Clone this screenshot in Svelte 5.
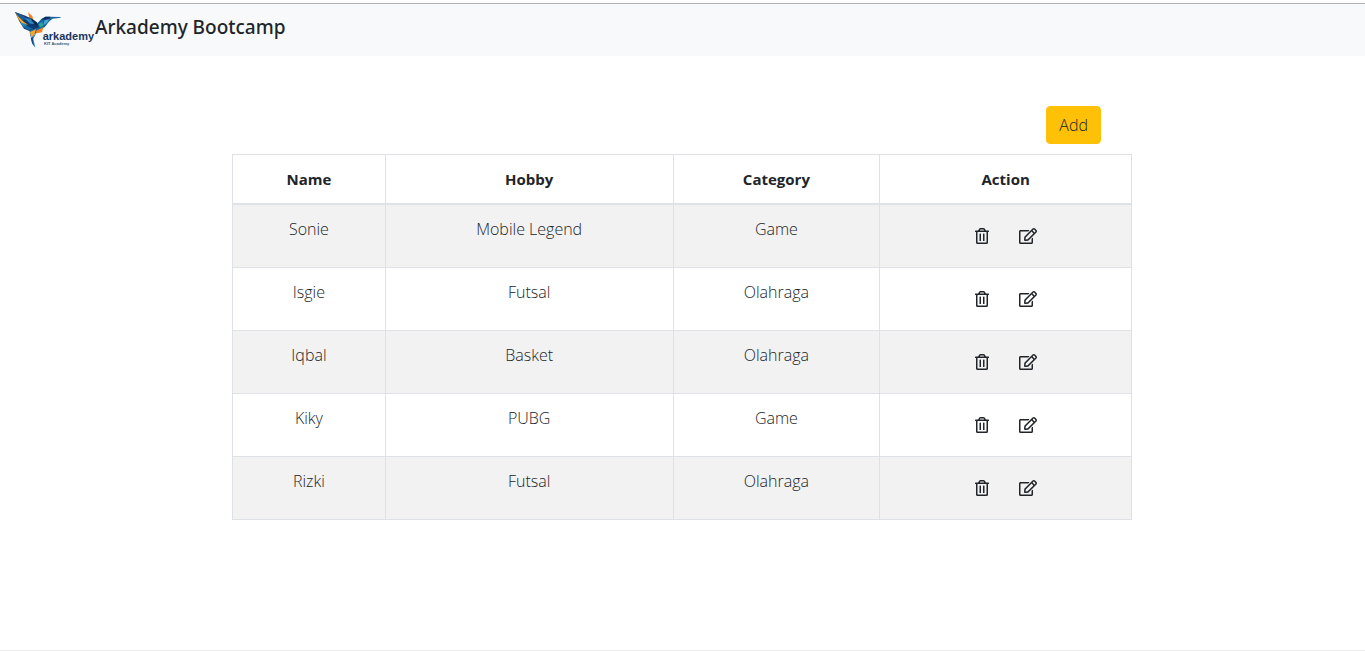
<script>
  const people = [
    { name: 'Sonie', hobby: 'Mobile Legend', category: 'Game' },
    { name: 'Isgie', hobby: 'Futsal', category: 'Olahraga' },
    { name: 'Iqbal', hobby: 'Basket', category: 'Olahraga' },
    { name: 'Kiky', hobby: 'PUBG', category: 'Game' },
    { name: 'Rizki', hobby: 'Futsal', category: 'Olahraga' }
  ];
</script>

<div class="page">
  <nav class="navbar">
    <a class="brand" href="#home">
      <svg class="logo" viewBox="42 30 243 120" aria-hidden="true">
        <!-- wings -->
        <polygon points="84,37 97,48 101,66 89,58" fill="#f58220" />
        <polygon points="45,36 72,46 98,57 112,68 124,80 112,92 88,93 72,86 58,64" fill="#0e3a72" />
        <polygon points="45,36 70,47 84,58 66,60" fill="#1b5e96" />
        <polygon points="46,38 56,50 72,66 84,74 66,71 56,58" fill="#f9a825" />
        <polygon points="61,68 76,71 82,80 69,80" fill="#2587b6" />
        <polygon points="69,82 83,79 99,86 86,91" fill="#1764a0" />
        <polygon points="74,55 92,56 106,72 90,71" fill="#2a86b8" />
        <polygon points="92,57 108,65 118,77 106,76" fill="#0a2850" />
        <!-- head and beak -->
        <polygon points="112,70 124,57 136,50 150,50 182,51 182,53 157,56 146,66 134,82 118,86" fill="#1764a0" />
        <polygon points="124,58 137,50 151,50 147,57 135,59" fill="#0c2d5d" />
        <polygon points="134,61 148,58 141,68 130,76" fill="#4ba6d8" />
        <polygon points="116,72 127,66 130,78 120,82" fill="#28a59a" />
        <!-- breast and tail -->
        <polygon points="88,91 112,84 131,81 122,92 100,104 92,112" fill="#1c68a5" />
        <polygon points="90,96 108,88 103,104 94,114" fill="#f9a825" />
        <polygon points="108,92 130,82 126,97 109,100" fill="#f58220" />
        <polygon points="92,114 103,104 109,99 100,116 106,143 97,131" fill="#2b82c4" />
        <polygon points="93,115 98,111 98,127 104,140 96,129" fill="#0e3a72" />
        <text class="wordmark" x="128" y="121">arkademy</text>
        <text class="tagline" x="132" y="136">KIT Academy</text>
      </svg>
      <span>Arkademy Bootcamp</span>
    </a>
  </nav>

  <main class="content">
    <div class="toolbar">
      <button class="btn add" type="button">Add</button>
    </div>

    <table>
      <colgroup>
        <col class="col-name" />
        <col class="col-hobby" />
        <col class="col-category" />
        <col class="col-action" />
      </colgroup>
      <thead>
        <tr>
          <th scope="col">Name</th>
          <th scope="col">Hobby</th>
          <th scope="col">Category</th>
          <th scope="col">Action</th>
        </tr>
      </thead>
      <tbody>
        {#each people as person}
          <tr>
            <td>{person.name}</td>
            <td>{person.hobby}</td>
            <td>{person.category}</td>
            <td>
              <div class="actions">
                <button class="btn" type="button" aria-label="Delete">
                  <svg width="14" height="16" viewBox="0 0 448 512" aria-hidden="true">
                    <path d="M268 416h24a12 12 0 0 0 12-12V188a12 12 0 0 0-12-12h-24a12 12 0 0 0-12 12v216a12 12 0 0 0 12 12zM432 80h-82.41l-34-56.7A48 48 0 0 0 274.41 0H173.59a48 48 0 0 0-41.16 23.3L98.41 80H16A16 16 0 0 0 0 96v16a16 16 0 0 0 16 16h16v336a48 48 0 0 0 48 48h288a48 48 0 0 0 48-48V128h16a16 16 0 0 0 16-16V96a16 16 0 0 0-16-16zM171.84 50.91A6 6 0 0 1 177 48h94a6 6 0 0 1 5.15 2.91L293.61 80H154.39zM368 464H80V128h288zm-212-48h24a12 12 0 0 0 12-12V188a12 12 0 0 0-12-12h-24a12 12 0 0 0-12 12v216a12 12 0 0 0 12 12z" />
                  </svg>
                </button>
                <button class="btn" type="button" aria-label="Edit">
                  <svg width="18" height="16" viewBox="0 0 576 512" aria-hidden="true">
                    <path d="M402.3 344.9l32-32c5-5 13.7-1.5 13.7 5.7V464c0 26.5-21.5 48-48 48H48c-26.5 0-48-21.5-48-48V112c0-26.5 21.5-48 48-48h273.5c7.1 0 10.7 8.6 5.7 13.7l-32 32c-1.5 1.5-3.5 2.3-5.7 2.3H48v352h352V350.5c0-2.1.8-4.1 2.3-5.6zm156.6-201.8L296.3 405.7l-90.4 10c-26.2 2.9-48.5-19.2-45.6-45.6l10-90.4L432.9 17.1c22.9-22.9 59.9-22.9 82.7 0l43.2 43.2c22.9 22.9 22.9 60 .1 82.8zM460.1 174L402 115.9 216.2 301.8l-7.3 65.3 65.3-7.3L460.1 174zm64.8-79.7l-43.2-43.2c-4.1-4.1-10.8-4.1-14.8 0L436 82l58.1 58.1 30.9-30.9c4-4.2 4-10.8-.1-14.9z" />
                  </svg>
                </button>
              </div>
            </td>
          </tr>
        {/each}
      </tbody>
    </table>
  </main>
</div>

<style>
  :global(body) {
    margin: 0;
    background: #fff;
  }

  .page {
    box-sizing: border-box;
    min-height: 100vh;
    padding-top: 3px;
    border-bottom: 1px solid #ebebeb;
    color: #212529;
    font-family: 'Open Sans', 'Noto Sans', sans-serif;
    font-size: 16px;
    font-weight: 300;
    line-height: 24px;
  }

  .navbar {
    display: flex;
    padding: 6px 14px;
    border-top: 1px solid #b4b4b4;
    background: #f8f9fa;
  }

  .brand {
    display: flex;
    align-items: flex-start;
    color: inherit;
    font-family: 'Noto Sans', sans-serif;
    font-size: 19px;
    font-weight: 500;
    line-height: 34px;
    text-decoration: none;
  }

  .logo {
    width: 81px;
    height: 40px;
    overflow: visible;
  }

  .wordmark {
    fill: #17365f;
    font-family: 'Liberation Sans', sans-serif;
    font-size: 33px;
    font-weight: 700;
  }

  .tagline {
    fill: #3c5878;
    font-family: 'Liberation Sans', sans-serif;
    font-size: 12px;
    font-weight: 700;
  }

  .content {
    max-width: 900px;
    margin: 0 auto;
    padding: 50px 17px 50px 16px;
  }

  .toolbar {
    display: flex;
    justify-content: flex-end;
    padding: 0 31px 10px;
  }

  .btn {
    padding: 6px 12px;
    border: 1px solid transparent;
    border-radius: 4px;
    background: transparent;
    color: inherit;
    font: inherit;
    cursor: pointer;
  }

  .add {
    border-color: #ffc107;
    background: #ffc107;
  }

  table {
    width: 100%;
    table-layout: fixed;
    border-collapse: collapse;
    border: 1px solid #dee2e6;
    text-align: center;
  }

  .col-name {
    width: 17%;
  }

  .col-hobby {
    width: 32%;
  }

  .col-category {
    width: 23%;
  }

  .col-action {
    width: 28%;
  }

  th,
  td {
    padding: 12px;
    border: 1px solid #dee2e6;
    vertical-align: top;
  }

  th {
    border-bottom-width: 2px;
    font-size: 15px;
    font-weight: 700;
  }

  tbody tr:nth-child(odd) {
    background: #f2f2f2;
  }

  .actions {
    display: flex;
    justify-content: center;
    gap: 4px;
  }

  .actions .btn {
    display: flex;
    align-items: center;
    height: 38px;
  }

  .actions svg {
    fill: currentColor;
  }
</style>
